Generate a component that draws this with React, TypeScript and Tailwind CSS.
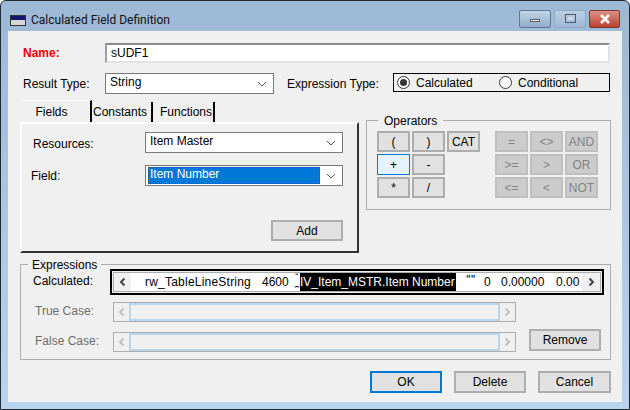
const btn = "flex items-center justify-center border-2 border-[#adadad] bg-[#e1e1e1] text-[12px] text-black";
const off = "flex items-center justify-center border-2 border-[#bfbfbf] bg-[#cccccc] text-[12px] text-[#838383]";

function Chevron({ color = "#555" }: { color?: string }) {
  return (
    <svg width="10" height="6" viewBox="0 0 10 6" fill="none">
      <path d="M1 1l4 4 4-4" stroke={color} strokeWidth="1" />
    </svg>
  );
}

function Arrow({ right, color }: { right?: boolean; color: string }) {
  return (
    <svg width="7" height="8" viewBox="0 0 7 8" fill="none">
      <path d={right ? "M1.5 .5L5 4 1.5 7.500" : "M5.500 .5L2 4l3.500 3.500"} stroke={color} strokeWidth="2" />
    </svg>
  );
}

function Combo({ text, width, selected }: { text: string; width: string; selected?: boolean }) {
  return (
    <div className={`flex h-[21px] items-center border border-[#7a7a7a] bg-white pr-[4px] ${width}`}>
      {selected ? (
        <div className="ml-[2px] flex h-[17px] flex-1 items-center border border-dotted border-[#7a4a00] bg-[#0078d7] pb-[3px] pl-[1px] text-white">
          {text}
        </div>
      ) : (
        <div className="flex-1 pb-[4px] pl-[4px]">{text}</div>
      )}
      <div className="ml-[6px] mr-[2px]">
        <Chevron />
      </div>
    </div>
  );
}

function OpGrid({ rows, cls }: { rows: string[][]; cls: string }) {
  return (
    <div className="flex flex-col gap-[2px]">
      {rows.map((row, i) => (
        <div key={i} className="flex gap-[2px]">
          {row.map((label, j) => (
            <div
              key={j}
              className={
                label === "+"
                  ? "flex h-[21px] w-[33px] items-center justify-center border border-[#0078d7] bg-[#e5f1fb] text-[12px]"
                  : `h-[21px] w-[33px] ${cls}`
              }
            >
              {label}
            </div>
          ))}
        </div>
      ))}
    </div>
  );
}

function EmptyScroll({ label }: { label: string }) {
  return (
    <div className="flex h-[20px] items-center">
      <div className="ml-[14px] w-[78px] pb-[3px] text-[#6d6d6d]">{label}</div>
      <div className="flex h-[20px] w-[403px] items-stretch border border-[#adadad]">
        <div className="flex w-[17px] items-center justify-center border-r-2 border-[#b9d4ed]">
          <Arrow color="#c0c0c0" />
        </div>
        <div className="flex-1 border-b-2 border-t-2 border-[#b9d4ed]" />
        <div className="flex w-[17px] items-center justify-center border-l-2 border-[#b9d4ed]">
          <Arrow right color="#c0c0c0" />
        </div>
      </div>
    </div>
  );
}

export default function App() {
  return (
    <div
      className="flex h-[410px] w-[630px] flex-col overflow-hidden rounded-t-[6px] border border-[#1f2b33] bg-gradient-to-b from-[#9db8d5] to-[#b9d4ed] text-[12px] leading-none text-black"
      style={{ fontFamily: '"Liberation Sans", Arial, sans-serif' }}
    >
      {/* title bar */}
      <div className="flex h-[30px] shrink-0 items-center pl-[9px] pr-[9px] pt-[8px]">
        <div className="flex h-[11px] w-[16px] flex-col border border-[#333] bg-[#d8d8d8]">
          <div className="h-[4px] bg-[#14146e]" />
        </div>
        <div className="ml-[5px] text-[12px] text-[#111]" style={{ fontFamily: 'Roboto, sans-serif' }}>
          Calculated Field Definition
        </div>
        <div className="-mt-[3px] ml-auto flex gap-[3px]">
          <div className="flex h-[18px] w-[32px] items-center justify-center rounded-[2px] border border-[#5f7a98] bg-gradient-to-b from-[#c3d5e8] to-[#8eacc9]">
            <div className="mt-[3px] h-[3px] w-[10px] border border-[#5b5b5b] bg-white" />
          </div>
          <div className="flex h-[18px] w-[32px] items-center justify-center rounded-[2px] border border-[#8eaac7] bg-gradient-to-b from-[#bcd0e4] to-[#9db8d5]">
            <div className="flex h-[9px] w-[11px] items-center justify-center border border-[#4a5c70]">
              <div className="h-[3px] w-[5px] bg-[#d0dbe6]" />
            </div>
          </div>
          <div className="flex h-[18px] w-[31px] items-center justify-center rounded-[2px] border border-[#7b3a30] bg-gradient-to-b from-[#dc9186] to-[#b83f2c]">
            <svg width="12" height="10" viewBox="0 0 12 10">
              <path d="M2 1l8 8M10 1l-8 8" stroke="#fff" strokeWidth="2.500" />
            </svg>
          </div>
        </div>
      </div>

      {/* client area */}
      <div className="mx-[7px] mb-[7px] flex-1 bg-[#f0f0f0] pl-[12px] pr-[11px]">
        <div className="mt-[12px] flex h-[20px] items-center">
          <div className="w-[85px] pl-[3px] font-bold text-[#f00000]">Name:</div>
          <div className="flex h-[20px] w-[505px] items-center border-2 border-b-[#e3e3e3] border-l-[#a0a0a0] border-r-[#e3e3e3] border-t-[#8a8a8a] bg-white pl-[4px]">
            sUDF1
          </div>
        </div>

        <div className="mt-[10px] flex h-[21px] items-center">
          <div className="w-[85px] pl-[3px]">Result Type:</div>
          <Combo text="String" width="w-[169px]" />
          <div className="ml-[13px] w-[106px]">Expression Type:</div>
          <div className="mb-[2px] flex h-[19px] w-[217px] items-center border border-black pl-[3px]">
            <div className="flex h-[13px] w-[13px] items-center justify-center rounded-full border border-[#333] bg-white">
              <div className="h-[7px] w-[7px] rounded-full bg-[#333]" />
            </div>
            <div className="ml-[6px] w-[83px]">Calculated</div>
            <div className="h-[13px] w-[13px] rounded-full border border-[#333] bg-white" />
            <div className="ml-[6px]">Conditional</div>
          </div>
        </div>

        <div className="flex">
          {/* tabs and field panel */}
          <div className="w-[339px]">
            <div className="mt-[6px] flex h-[22px] items-stretch pl-[3px]">
              <div className="flex w-[69px] items-center justify-center border-r-2 border-t border-r-black border-t-white pr-[10px]">Fields</div>
              <div className="mt-[2px] flex w-[61px] items-center border-r-2 border-r-black pl-[1px] pb-[1px]">Constants</div>
              <div className="ml-[2px] mt-[2px] flex w-[60px] items-center border-r-2 border-r-black pl-[5px] pb-[1px]">Functions</div>
            </div>
            <div className="h-[131px] border-2 border-b-[#333] border-l-white border-r-[#333] border-t-white pl-[11px] pr-[13px] pt-[8px]">
              <div className="flex h-[21px] items-center">
                <div className="w-[112px] pt-[2px]">Resources:</div>
                <Combo text="Item Master" width="w-[198px]" />
              </div>
              <div className="mt-[12px] flex h-[21px] items-center">
                <div className="-ml-[2px] mr-[2px] w-[112px] pt-[1px]">Field:</div>
                <Combo text="Item Number" width="w-[198px]" selected />
              </div>
              <div className="mr-[1px] mt-[34px] flex justify-end">
                <div className={`${btn} h-[21px] w-[72px]`}>Add</div>
              </div>
            </div>
          </div>

          {/* operators */}
          <div className="relative ml-[7px] mt-[26px] h-[90px] w-[245px] border border-[#adadad] pl-[10px] pt-[10px]">
            <div className="absolute -top-[6px] left-[11px] bg-[#f0f0f0] px-[6px]">Operators</div>
            <div className="flex gap-[15px]">
              <OpGrid rows={[["(", ")", "CAT"], ["+", "-"], ["*", "/"]]} cls={btn} />
              <OpGrid rows={[["=", "<>", "AND"], [">=", ">", "OR"], ["<=", "<", "NOT"]]} cls={off} />
            </div>
          </div>
        </div>

        {/* expressions */}
        <div className="relative mt-[11px] h-[96px] w-[591px] border border-[#adadad] pt-[4px]">
          <div className="absolute -top-[6px] left-[7px] bg-[#f0f0f0] px-[4px]">Expressions</div>
          <div className="flex h-[26px] items-center">
            <div className="ml-[12px] w-[77px] pb-[3px]">Calculated:</div>
            <div className="flex h-[26px] w-[494px] items-stretch border-2 border-black p-[1px]">
              <div className="flex flex-1 items-stretch border border-[#adadad]">
                <div className="flex w-[17px] items-center justify-center">
                  <Arrow color="#444" />
                </div>
                <div className="flex flex-1 items-center whitespace-pre bg-white">
                  <span className="ml-[14px] w-[117px] tracking-[0.22px]">rw_TableLineString</span>
                  <span className="w-[32px]">4600</span>
                  <span className="flex h-full w-[6px] flex-col items-center justify-between text-[9px] leading-[9px]">
                    <span>˘</span>
                    <span>⌢</span>
                  </span>
                  <span className="flex h-full w-[156px] items-center bg-black text-white">IV_Item_MSTR.Item Number</span>
                  <span className="ml-[10px] mb-[4px] w-[18px] text-[10px] font-bold text-[#1a3a6a]">""</span>
                  <span className="w-[17px]">0</span>
                  <span className="w-[55px]">0.00000</span>
                  <span>0.00</span>
                </div>
                <div className="flex w-[18px] items-center justify-center">
                  <Arrow right color="#444" />
                </div>
              </div>
            </div>
          </div>
          <div className="mt-[7px]">
            <EmptyScroll label="True Case:" />
          </div>
          <div className="mt-[10px] flex items-start">
            <EmptyScroll label="False Case:" />
            <div className={`${btn} -mt-[3px] ml-[13px] h-[22px] w-[72px]`}>Remove</div>
          </div>
        </div>

        {/* footer buttons */}
        <div className="mt-[11px] flex w-[591px] justify-end gap-[12px]">
          <div className="flex h-[22px] w-[72px] items-center justify-center border-2 border-[#0078d7] bg-[#e1e1e1]">OK</div>
          <div className={`${btn} h-[22px] w-[72px]`}>Delete</div>
          <div className={`${btn} h-[22px] w-[73px]`}>Cancel</div>
        </div>
      </div>
    </div>
  );
}
